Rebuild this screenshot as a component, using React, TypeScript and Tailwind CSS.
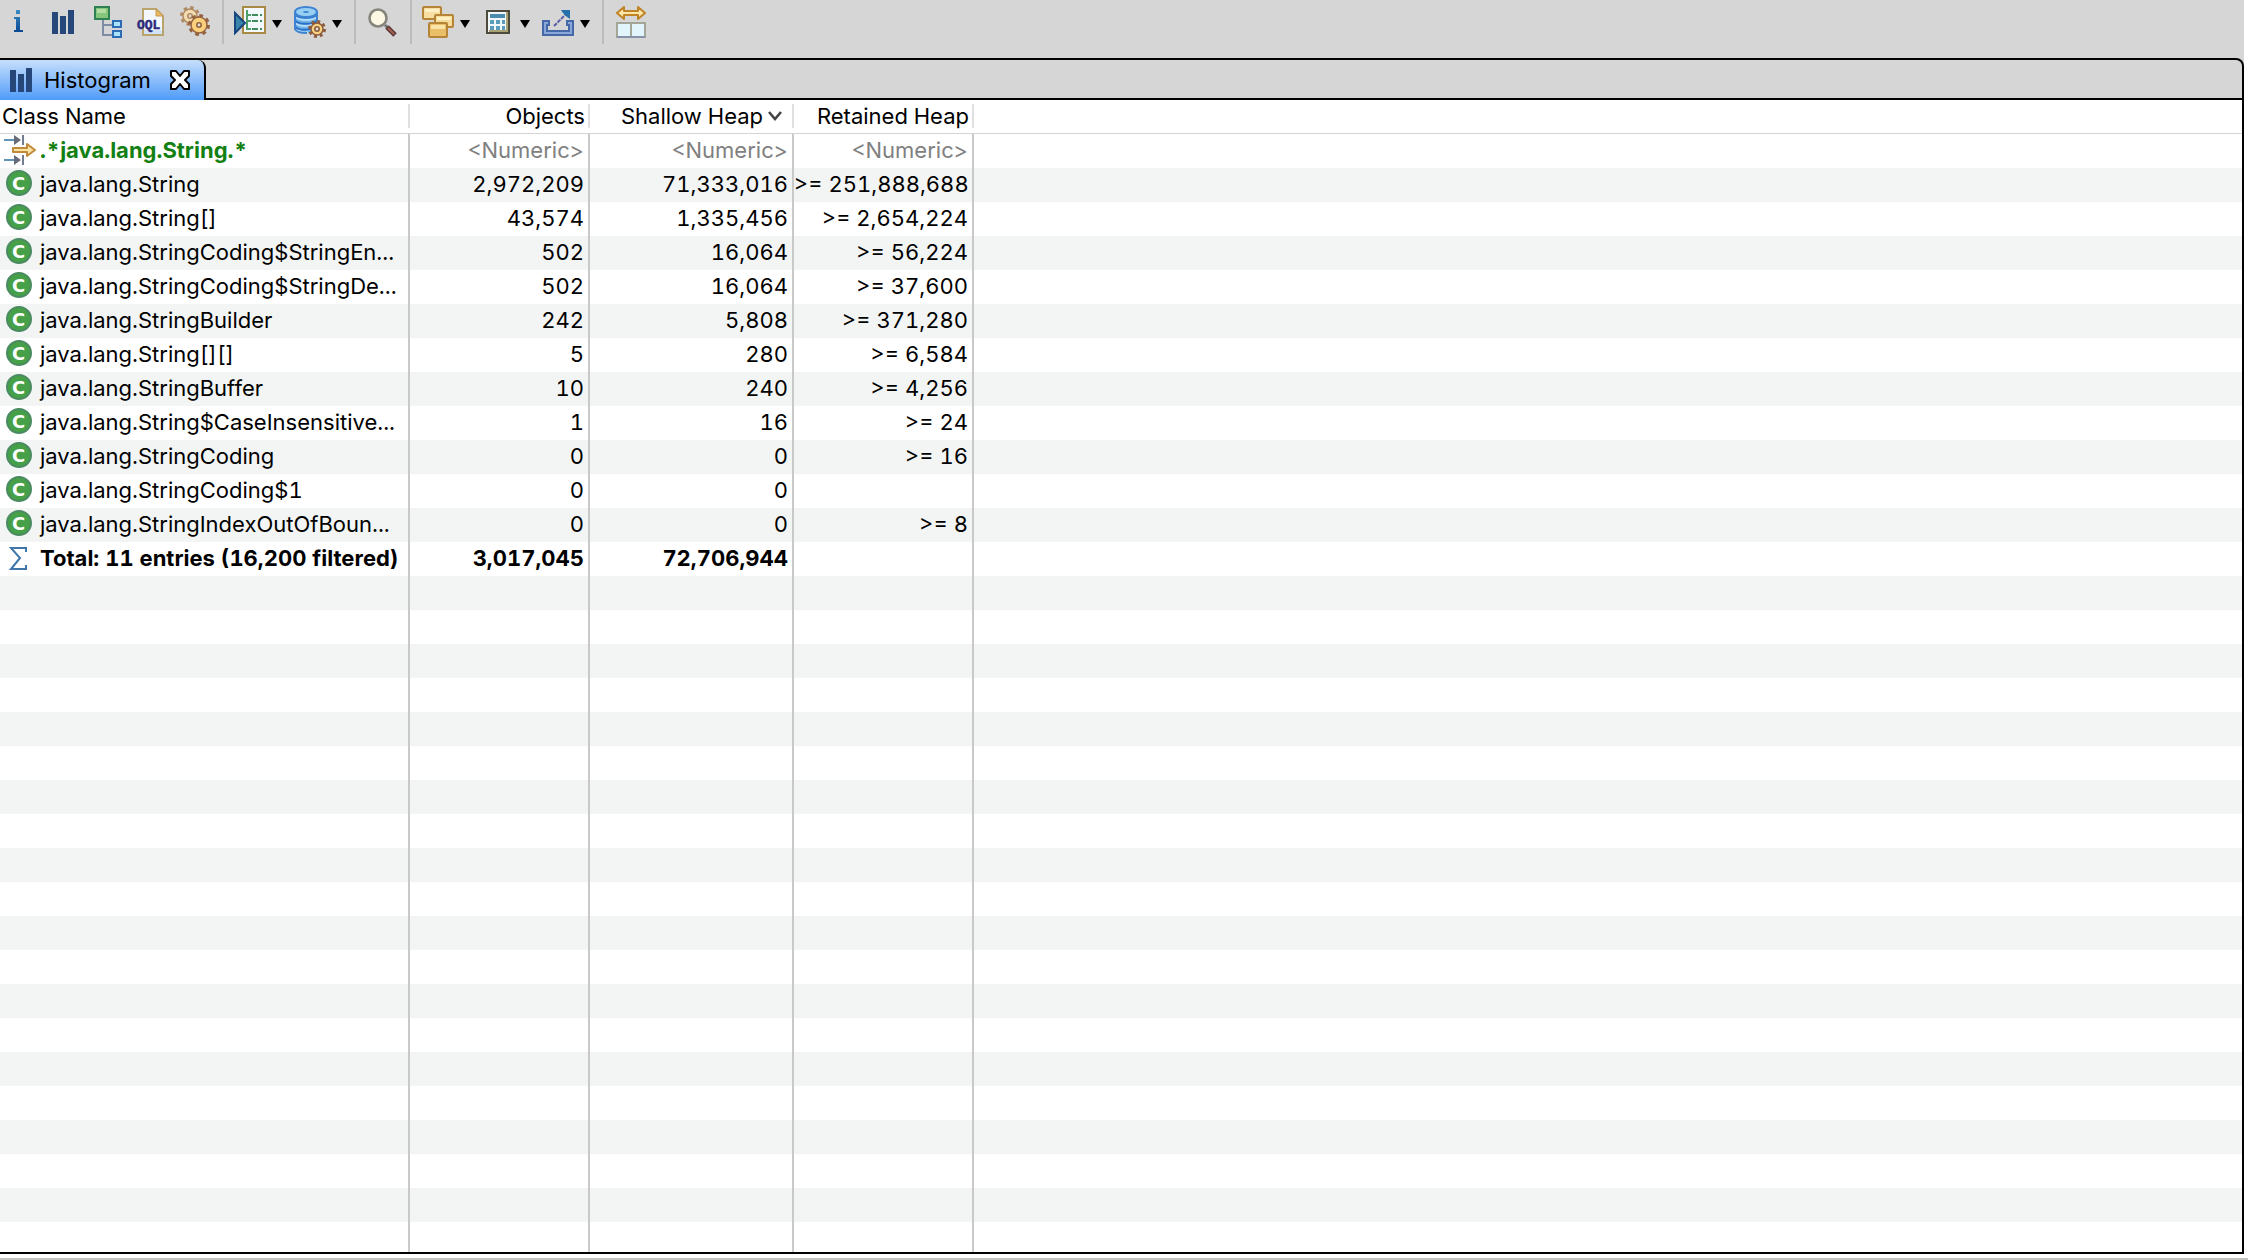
import type { ReactNode } from "react";

type Row = {
  name: string;
  objects: string;
  shallow: string;
  retained: string;
};

const ROWS: Row[] = [
  { name: "java.lang.String", objects: "2,972,209", shallow: "71,333,016", retained: ">= 251,888,688" },
  { name: "java.lang.String[]", objects: "43,574", shallow: "1,335,456", retained: ">= 2,654,224" },
  { name: "java.lang.StringCoding$StringEn...", objects: "502", shallow: "16,064", retained: ">= 56,224" },
  { name: "java.lang.StringCoding$StringDe...", objects: "502", shallow: "16,064", retained: ">= 37,600" },
  { name: "java.lang.StringBuilder", objects: "242", shallow: "5,808", retained: ">= 371,280" },
  { name: "java.lang.String[][]", objects: "5", shallow: "280", retained: ">= 6,584" },
  { name: "java.lang.StringBuffer", objects: "10", shallow: "240", retained: ">= 4,256" },
  { name: "java.lang.String$CaseInsensitive...", objects: "1", shallow: "16", retained: ">= 24" },
  { name: "java.lang.StringCoding", objects: "0", shallow: "0", retained: ">= 16" },
  { name: "java.lang.StringCoding$1", objects: "0", shallow: "0", retained: "" },
  { name: "java.lang.StringIndexOutOfBoun...", objects: "0", shallow: "0", retained: ">= 8" },
];

// blank striped rows below the total, the panel clips what does not fit
const EMPTY_ROWS = Array.from({ length: 40 }, (_, i) => i);

function Icon({ children }: { children: ReactNode }) {
  return (
    <svg viewBox="0 0 32 32" className="block size-8 shrink-0" aria-hidden="true">
      {children}
    </svg>
  );
}

function InfoIcon() {
  return (
    <Icon>
      <defs>
        <linearGradient id="info" x1="0" y1="0" x2="0" y2="1">
          <stop offset="0" stopColor="#3a8cc4" />
          <stop offset="1" stopColor="#0a4a94" />
        </linearGradient>
      </defs>
      <path d="M14 4h4v4h-4zM12 11h6v13h3v2h-9v-2h2V13h-2z" fill="url(#info)" />
    </Icon>
  );
}

function HistogramIcon() {
  return (
    <Icon>
      <path d="M6 6h6v22H6zM14 10h6v18h-6zM22 4h6v24h-6z" fill="#26477a" />
    </Icon>
  );
}

function TreeIcon() {
  return (
    <Icon>
      <path d="M13 14v15h9M13 19h9" fill="none" stroke="#7d8ba3" strokeWidth="2" />
      <rect x="5" y="1" width="14" height="12" fill="#86c67c" stroke="#2f8052" strokeWidth="2" />
      <path d="M7 3h9v4H7z" fill="#b4dda4" />
      <rect x="23" y="15" width="8" height="6" fill="#a8e2fb" stroke="#2c6cb4" strokeWidth="2" />
      <rect x="23" y="25" width="8" height="6" fill="#a8e2fb" stroke="#2c6cb4" strokeWidth="2" />
    </Icon>
  );
}

function OqlIcon() {
  return (
    <Icon>
      <path d="M9 3h13l7 7v19H9z" fill="#f4f8fe" stroke="#b9a56c" strokeWidth="2" />
      <path d="M10 24h18v4H10z" fill="#d3e2f6" />
      <path d="M22 3v7h7z" fill="#e8b765" stroke="#c99a4c" />
      <text
        x="3"
        y="23"
        fontSize="13"
        fontWeight="700"
        fill="#2b2a7c"
        stroke="#2b2a7c"
        strokeWidth="0.5"
        fontFamily="'Liberation Mono', monospace"
      >
        OQL
      </text>
    </Icon>
  );
}

type GearProps = { cx: number; cy: number; r: number; fill: string; stroke: string };

function Gear({ cx, cy, r, fill, stroke }: GearProps) {
  // eight teeth, each as wide as the gap next to it
  const tooth = ((r - 1.5) * Math.PI) / 8;
  return (
    <g>
      <circle cx={cx} cy={cy} r={r - 1.5} fill="none" stroke={stroke} strokeWidth="3" strokeDasharray={`${tooth} ${tooth}`} />
      <circle cx={cx} cy={cy} r={r - 3} fill={fill} stroke={stroke} strokeWidth="1.5" />
      <circle cx={cx} cy={cy} r="2.2" fill="#e2dcd4" stroke={stroke} strokeWidth="1.6" />
    </g>
  );
}

function GearsIcon() {
  return (
    <Icon>
      <Gear cx={12} cy={10} r={10} fill="#f3dcb0" stroke="#b08a62" />
      <Gear cx={21} cy={19} r={11} fill="#fbd07c" stroke="#94623f" />
    </Icon>
  );
}

function RunReportIcon() {
  return (
    <Icon>
      <rect x="9" y="1" width="22" height="26" fill="#f3f8fc" stroke="#a98a45" strokeWidth="2" />
      <path d="M13 4v19h4M13 9h4M13 15h4" fill="none" stroke="#4f9f6a" strokeWidth="2" />
      <path d="M18 9h6M18 15h6M18 23h6M26 9h2M26 15h2M26 23h2" stroke="#3f8d5c" strokeWidth="2" />
      <path d="M1 7v20l10-10z" fill="#3a83ab" stroke="#17457d" strokeWidth="2" />
    </Icon>
  );
}

function DatabaseIcon() {
  return (
    <Icon>
      <path d="M1 5v18c0 3 5 4 11 4s11-1 11-4V5z" fill="#6db3ea" />
      <path d="M2 11c3 4 17 4 20 0M2 17c3 4 14 4 18 0M2 23c3 3 9 4 12 3" fill="none" stroke="#b4dcf7" strokeWidth="2" />
      <path d="M1 8c2 5 20 5 22 0M1 14c2 5 20 5 22 0M1 20c2 5 16 5 20 0" fill="none" stroke="#2c6fc8" strokeWidth="2" />
      <path d="M1 6v17c1 3 5 4 12 4M23 6v9" fill="none" stroke="#3d83d2" strokeWidth="2" />
      <ellipse cx="12" cy="6" rx="11" ry="5" fill="#97d0f3" stroke="#3d83d2" strokeWidth="2" />
      <ellipse cx="12" cy="6" rx="3" ry="1" fill="#3d83d2" />
      <Gear cx={23} cy={23} r={9} fill="#f9d380" stroke="#8c5a3c" />
    </Icon>
  );
}

function SearchIcon() {
  return (
    <Icon>
      <path d="M19 19l4 4" stroke="#777" strokeWidth="3" />
      <path d="M21 21l8 8" stroke="#5d3a3a" strokeWidth="5" />
      <path d="M22 22l6 6" stroke="#a4604f" strokeWidth="2" />
      <circle cx="12" cy="12" r="8.5" fill="#fdf8e4" stroke="#85857c" strokeWidth="2.6" />
    </Icon>
  );
}

function GroupIcon() {
  return (
    <Icon>
      <g stroke="#b58436" strokeWidth="2">
        <rect x="1" y="1" width="18" height="12" rx="1" fill="#f6dfa0" />
        <path d="M3 3h14v3H3z" fill="#fdf0c4" stroke="none" />
        <rect x="13" y="9" width="18" height="12" rx="1" fill="#f6dc98" />
        <path d="M15 11h14v3H15z" fill="#fdf0c4" stroke="none" />
        <rect x="7" y="17" width="18" height="14" rx="1" fill="#e9c067" />
        <path d="M9 19h14v4H9z" fill="#f9e3a8" stroke="none" />
      </g>
    </Icon>
  );
}

function CalculatorIcon() {
  return (
    <Icon>
      <rect x="5" y="5" width="22" height="22" fill="#f1f8fb" stroke="#4b4a3c" strokeWidth="2" />
      <path d="M25 6v19H7" fill="none" stroke="#a9a274" strokeWidth="2" />
      <path d="M8 8h15v4H8z" fill="#4b8cae" />
      <path d="M8 14h4v4H8zM14 14h4v4h-4zM20 14h3v4h-3zM8 20h4v4H8zM14 20h4v4h-4zM20 20h3v4h-3z" fill="#5b9cbc" />
    </Icon>
  );
}

function ExportIcon() {
  return (
    <Icon>
      <path d="M1 15h6v4H5v6h22v-6h-2v-4h6v14H1z" fill="#8aa6da" stroke="#4568a8" strokeWidth="2" />
      <path d="M12 20L24 8" stroke="#5a5fa8" strokeWidth="2" strokeDasharray="4 1" />
      <path d="M19 4h9v9l-3-2-4-4z" fill="#2670ac" />
    </Icon>
  );
}

function CompareIcon() {
  return (
    <Icon>
      <path
        d="M3 7l7-6v4h14V1l7 6-7 6V9H10v4z"
        fill="#fae7a8"
        stroke="#c08426"
        strokeWidth="2"
        strokeLinejoin="round"
      />
      <rect x="3" y="17" width="28" height="14" fill="#e2f5fd" stroke="#a3a695" strokeWidth="2" />
      <path d="M17 17v14" stroke="#a3a695" strokeWidth="2" />
      <path d="M3 31h28" stroke="#8792aa" strokeWidth="2" />
    </Icon>
  );
}

function FilterIcon() {
  return (
    <Icon>
      <path d="M0 6h12M0 26h12" stroke="#5f93b8" strokeWidth="2" />
      <path d="M10 1l7 5-7 5zM10 21l7 5-7 5z" fill="#666c78" />
      <path d="M19 1v10M19 21v10" stroke="#727b90" strokeWidth="2" />
      <path d="M9 14h14v-4l8 6-8 6v-4H9z" fill="#fbe3a4" stroke="#c08a3a" strokeWidth="2" strokeLinejoin="round" />
    </Icon>
  );
}

function ClassIcon() {
  return (
    <svg viewBox="0 0 26 26" className="block size-[26px] shrink-0" aria-hidden="true">
      <circle cx="13" cy="13" r="12" fill="#45a047" stroke="#4b8a62" strokeWidth="2" />
      <text
        x="12.5"
        y="19.5"
        textAnchor="middle"
        fontSize="18"
        fontWeight="700"
        fill="#fff"
        fontFamily="'DejaVu Sans', sans-serif"
      >
        C
      </text>
    </svg>
  );
}

function SumIcon() {
  return (
    <svg viewBox="0 0 26 26" className="block size-[26px] shrink-0" aria-hidden="true">
      <path d="M20 7V3H5l9 10-9 11h15v-4" fill="none" stroke="#3f77ab" strokeWidth="2" />
    </svg>
  );
}

function ToolButton({ label, menu, children }: { label: string; menu?: boolean; children: ReactNode }) {
  return (
    <button type="button" aria-label={label} className="flex items-center gap-1.5">
      {children}
      {menu && (
        <svg viewBox="0 0 10 8" className="mt-1 block h-2 w-2.5" aria-hidden="true">
          <path d="M0 0h10L5 8z" fill="#000" />
        </svg>
      )}
    </button>
  );
}

function ToolGroup({ children }: { children: ReactNode }) {
  return <div className="ml-3 flex h-11 items-center gap-3 border-l-2 border-[#bcbcbc] pl-2.5">{children}</div>;
}

function Toolbar() {
  return (
    <div className="flex h-[58px] shrink-0 items-start">
      <div className="flex h-11 items-center gap-3 pl-0.5">
        <ToolButton label="Overview"><InfoIcon /></ToolButton>
        <ToolButton label="Histogram"><HistogramIcon /></ToolButton>
        <ToolButton label="Dominator tree"><TreeIcon /></ToolButton>
        <ToolButton label="Object query"><OqlIcon /></ToolButton>
        <ToolButton label="Thread overview"><GearsIcon /></ToolButton>
      </div>
      <ToolGroup>
        <ToolButton label="Run report" menu><RunReportIcon /></ToolButton>
        <ToolButton label="Query browser" menu><DatabaseIcon /></ToolButton>
      </ToolGroup>
      <ToolGroup>
        <ToolButton label="Find object"><SearchIcon /></ToolButton>
      </ToolGroup>
      <ToolGroup>
        <ToolButton label="Group result" menu><GroupIcon /></ToolButton>
        <ToolButton label="Calculate retained size" menu><CalculatorIcon /></ToolButton>
        <ToolButton label="Export" menu><ExportIcon /></ToolButton>
      </ToolGroup>
      <ToolGroup>
        <ToolButton label="Compare"><CompareIcon /></ToolButton>
      </ToolGroup>
    </div>
  );
}

function TabBar() {
  return (
    <div className="flex h-10 shrink-0">
      <div className="flex w-[206px] items-center rounded-tr-lg border-r-2 border-black bg-linear-to-b from-[#c6defb] to-[#4d9bf8] pl-1">
        <HistogramIcon />
        <span className="ml-2">Histogram</span>
        <button type="button" aria-label="Close" className="ml-auto mr-3.5">
          <svg viewBox="0 0 20 20" className="block size-5" aria-hidden="true">
            <path
              d="M1 1h5l4 5 4-5h5v5l-4 4 4 4v5h-5l-4-5-4 5H1v-5l4-4-4-4z"
              fill="#fff"
              stroke="#000"
              strokeWidth="2"
              strokeLinejoin="round"
            />
          </svg>
        </button>
      </div>
      <div className="flex-1 border-b-2 border-black" />
    </div>
  );
}

function HeaderCell({ children }: { children?: ReactNode }) {
  return (
    <th className="p-0 pb-0.5 font-normal">
      <div className="flex h-6 items-center justify-end border-r-2 border-[#e0e0e0] pr-[3px]">{children}</div>
    </th>
  );
}

function NumberCell({ children }: { children?: ReactNode }) {
  return <td className="border-r-2 border-[#c9c9c9] p-0 pr-1 pb-0.5 text-right">{children}</td>;
}

function NameCell({ icon, children }: { icon?: ReactNode; children?: ReactNode }) {
  return (
    <td className="border-r-2 border-[#c9c9c9] p-0">
      <div className="flex h-[34px] items-center overflow-hidden pb-0.5">
        {icon}
        <span>{children}</span>
      </div>
    </td>
  );
}

function HistogramTable() {
  return (
    <table className="w-full table-fixed border-separate border-spacing-0 whitespace-nowrap tabular-nums">
      <colgroup>
        <col className="w-[410px]" />
        <col className="w-[180px]" />
        <col className="w-[204px]" />
        <col className="w-[180px]" />
        <col />
      </colgroup>
      <thead>
        <tr className="h-[34px] *:border-b *:border-[#d4d4d4]">
          <th className="p-0 pb-0.5 text-left font-normal">
            <div className="flex h-6 items-center border-r-2 border-[#e0e0e0] pl-0.5">Class Name</div>
          </th>
          <HeaderCell>Objects</HeaderCell>
          <HeaderCell>
            Shallow Heap
            <svg viewBox="0 0 16 10" className="ml-1 mr-1.5 block h-2.5 w-4" aria-hidden="true">
              <path d="M2 1l6 7 6-7" fill="none" stroke="#444" strokeWidth="2.6" />
            </svg>
          </HeaderCell>
          <HeaderCell>Retained Heap</HeaderCell>
          <th className="p-0" />
        </tr>
      </thead>
      <tbody>
        <tr className="h-[34px] text-[#808080]">
          <NameCell icon={<span className="mx-1"><FilterIcon /></span>}>
            <span className="font-bold text-[#128012]">.*java.lang.String.*</span>
          </NameCell>
          <NumberCell>&lt;Numeric&gt;</NumberCell>
          <NumberCell>&lt;Numeric&gt;</NumberCell>
          <NumberCell>&lt;Numeric&gt;</NumberCell>
          <td />
        </tr>
        {ROWS.map((row) => (
          <tr key={row.name} className="h-[34px] odd:bg-white even:bg-[#f3f5f4]">
            <NameCell icon={<span className="ml-1.5 mr-2 pb-0.5"><ClassIcon /></span>}>{row.name}</NameCell>
            <NumberCell>{row.objects}</NumberCell>
            <NumberCell>{row.shallow}</NumberCell>
            <NumberCell>{row.retained}</NumberCell>
            <td />
          </tr>
        ))}
        <tr className="h-[34px] font-bold">
          <NameCell icon={<span className="ml-1.5 mr-2"><SumIcon /></span>}>Total: 11 entries (16,200 filtered)</NameCell>
          <NumberCell>3,017,045</NumberCell>
          <NumberCell>72,706,944</NumberCell>
          <NumberCell />
          <td />
        </tr>
        {EMPTY_ROWS.map((i) => (
          <tr key={i} className="h-[34px] odd:bg-white even:bg-[#f3f5f4]">
            <NameCell />
            <NumberCell />
            <NumberCell />
            <NumberCell />
            <td />
          </tr>
        ))}
      </tbody>
    </table>
  );
}

export default function App() {
  return (
    <div className="flex h-screen flex-col overflow-hidden bg-white font-['Inter',sans-serif] text-[22px] leading-6 text-black">
      <div className="mr-1 flex min-h-0 flex-1 flex-col bg-[#d6d6d6]">
        <Toolbar />
        <main className="flex min-h-0 flex-1 flex-col rounded-tr-lg border-y-2 border-r-2 border-black">
          <TabBar />
          <div className="min-h-0 flex-1 overflow-hidden bg-white">
            <HistogramTable />
          </div>
        </main>
      </div>
      <div className="h-1.5 shrink-0 border-b-2 border-[#c4c4c0] bg-white" />
    </div>
  );
}
